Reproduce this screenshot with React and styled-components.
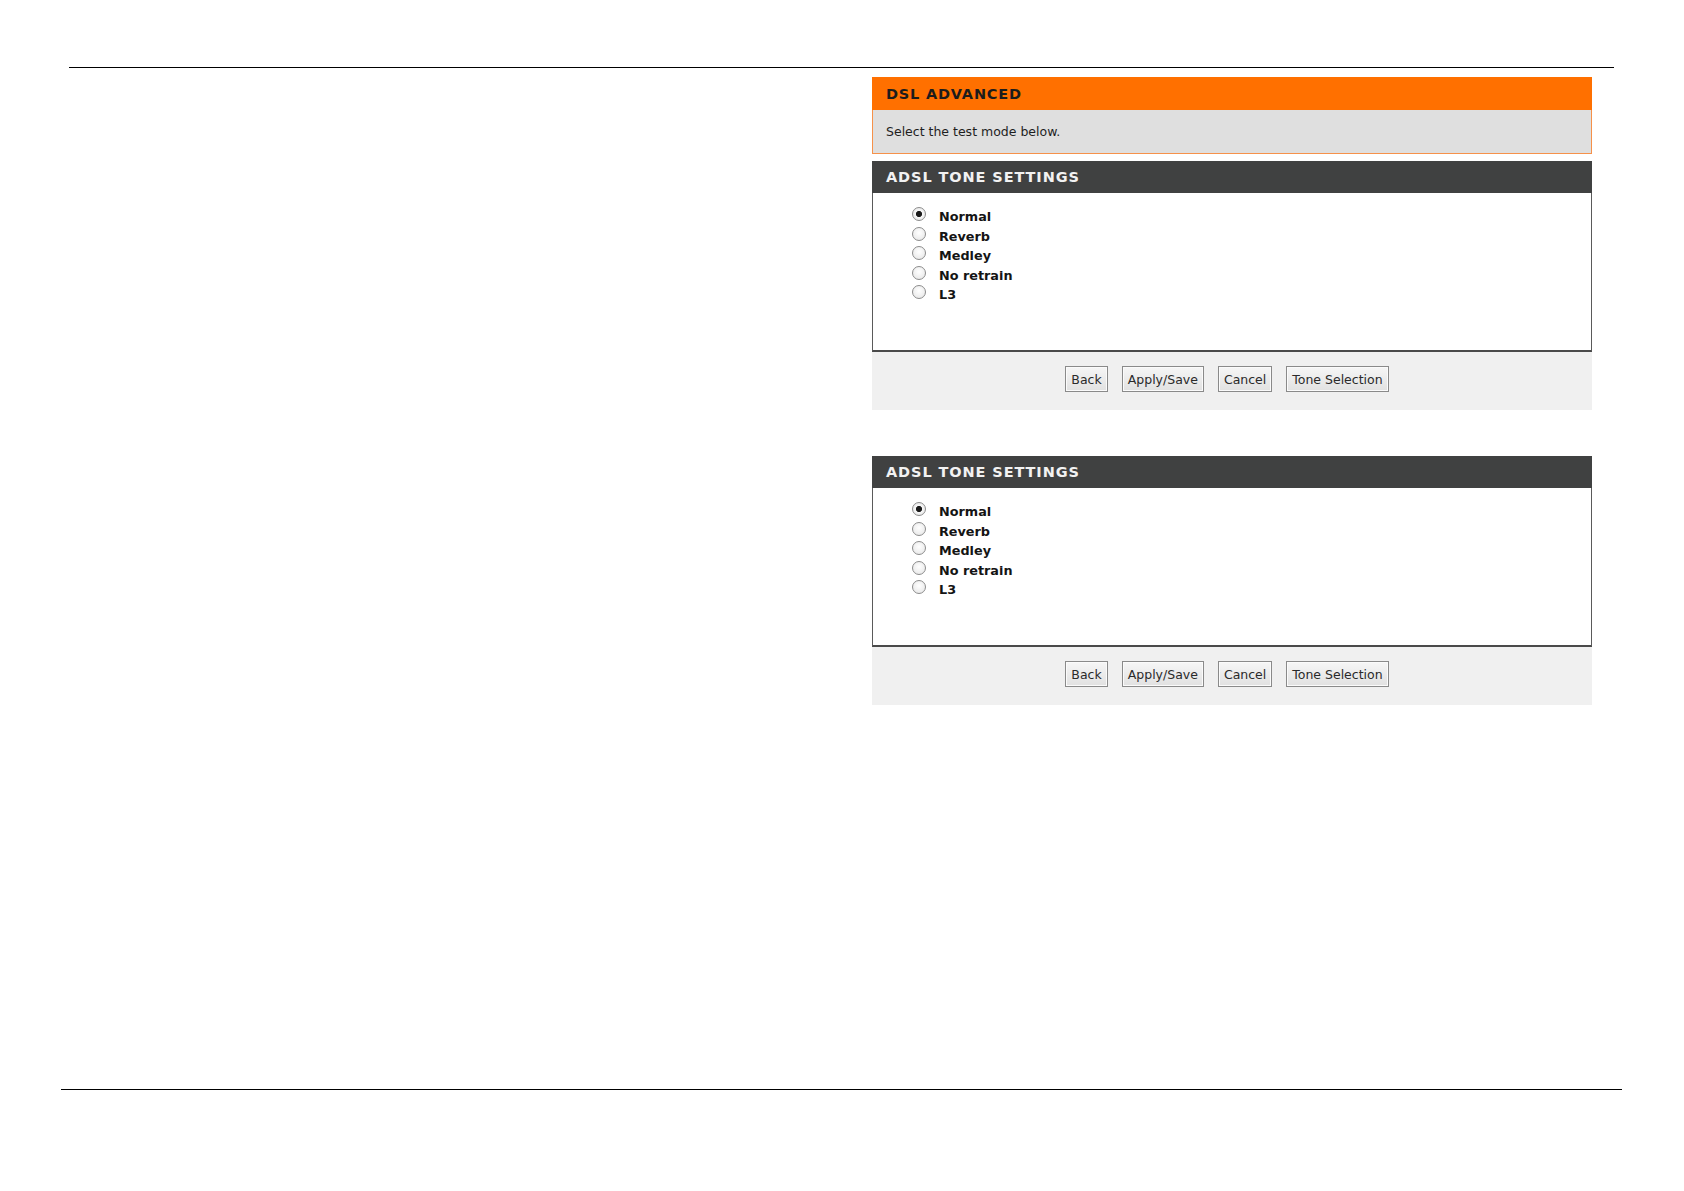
import styled, { createGlobalStyle } from "styled-components";

const GlobalStyle = createGlobalStyle`
  body {
    margin: 0;
    background: #fff;
    font-family: "DejaVu Sans", "Liberation Sans", sans-serif;
  }
`

const Page = styled.div`
  width: 1684px;
  height: 1191px;
  display: flex;
  flex-direction: column;
`
const Rule = styled.div`
  height: 1px;
  background: #000;
  margin-left: ${(props) => props.left}px;
  width: ${(props) => props.width}px;
`
const TopRule = styled(Rule)`
  margin-top: 67px;
`
const BottomRule = styled(Rule)`
  margin-bottom: 101px;
`
const Content = styled.div`
  flex: 1;
  padding: 9px 0 0 872px;
`
const Panel = styled.div`
  width: 720px;
`
const OrangeBar = styled.div`
  height: 33px;
  background: #ff7000;
  display: flex;
  align-items: center;
  padding-left: 14px;
  font-size: 14.5px;
  font-weight: bold;
  letter-spacing: 0.8px;
  color: #1c1c1c;
`
const Desc = styled.div`
  height: 43px;
  background: #dfdfdf;
  border: 1px solid #f6914a;
  border-top: none;
  display: flex;
  align-items: center;
  padding-left: 13px;
  font-size: 12.5px;
  color: #1e1e1e;
`
const Section = styled.div`
  margin-top: ${(props) => props.gap}px;
`
const DarkBar = styled.div`
  height: 32px;
  background: #404141;
  display: flex;
  align-items: center;
  padding-left: 14px;
  font-size: 14.5px;
  font-weight: bold;
  letter-spacing: 0.9px;
  color: #f2f2f2;
`
const Body = styled.div`
  height: 159px;
  box-sizing: border-box;
  border: 1px solid #5a5a5a;
  border-top: none;
  border-bottom: 2px solid #4a4a4a;
  padding: 14px 0 0 39px;
`
const Row = styled.label`
  display: flex;
  align-items: flex-start;
  height: 19.5px;
  line-height: 19.5px;
  font-size: 12.8px;
  font-weight: bold;
  color: #141414;
`
const Radio = styled.input`
  appearance: none;
  width: 14px;
  height: 14px;
  margin: 0 13px 0 0;
  border: 1px solid #8c8c8c;
  border-radius: 50%;
  box-sizing: border-box;
  background: radial-gradient(circle at 50% 40%, #ffffff, #e4e4e4);
  &:checked {
    background: radial-gradient(circle, #1a1a1a 0 2.7px, #f6f6f6 3.5px, #e2e2e2 100%);
  }
`
const ButtonBar = styled.div`
  height: 58px;
  box-sizing: border-box;
  background: #f0f0f0;
  display: flex;
  justify-content: center;
  align-items: flex-start;
  gap: 14px;
  padding: 14px 10px 0 0;
`
const Button = styled.button`
  height: 26px;
  padding: 0 5px;
  font-family: "DejaVu Sans", "Liberation Sans", sans-serif;
  font-size: 12.5px;
  color: #2a2a2a;
  background: linear-gradient(#f6f6f6, #e1e1e1);
  border: 1px solid #8a8a8a;
  box-shadow: inset 0 0 0 1px #fbfbfb;
  border-radius: 0;
`

const modes = ["Normal", "Reverb", "Medley", "No retrain", "L3"]
const buttons = ["Back", "Apply/Save", "Cancel", "Tone Selection"]

const ToneSettings = ({ name, gap }) => (
  <Section gap={gap}>
    <DarkBar>ADSL TONE SETTINGS</DarkBar>
    <Body>
      {modes.map((m, i) => (
        <Row key={m}>
          <Radio type="radio" name={name} defaultChecked={i === 0} />
          {m}
        </Row>
      ))}
    </Body>
    <ButtonBar>
      {buttons.map((b) => (
        <Button key={b}>{b}</Button>
      ))}
    </ButtonBar>
  </Section>
)

const App = () => {
  return (
    <Page>
      <GlobalStyle />
      <TopRule left={69} width={1545} />
      <Content>
        <Panel>
          <OrangeBar>DSL ADVANCED</OrangeBar>
          <Desc>Select the test mode below.</Desc>
          <ToneSettings name="tone1" gap={7} />
          <ToneSettings name="tone2" gap={46} />
        </Panel>
      </Content>
      <BottomRule left={61} width={1561} />
    </Page>
  )
}
export default App
